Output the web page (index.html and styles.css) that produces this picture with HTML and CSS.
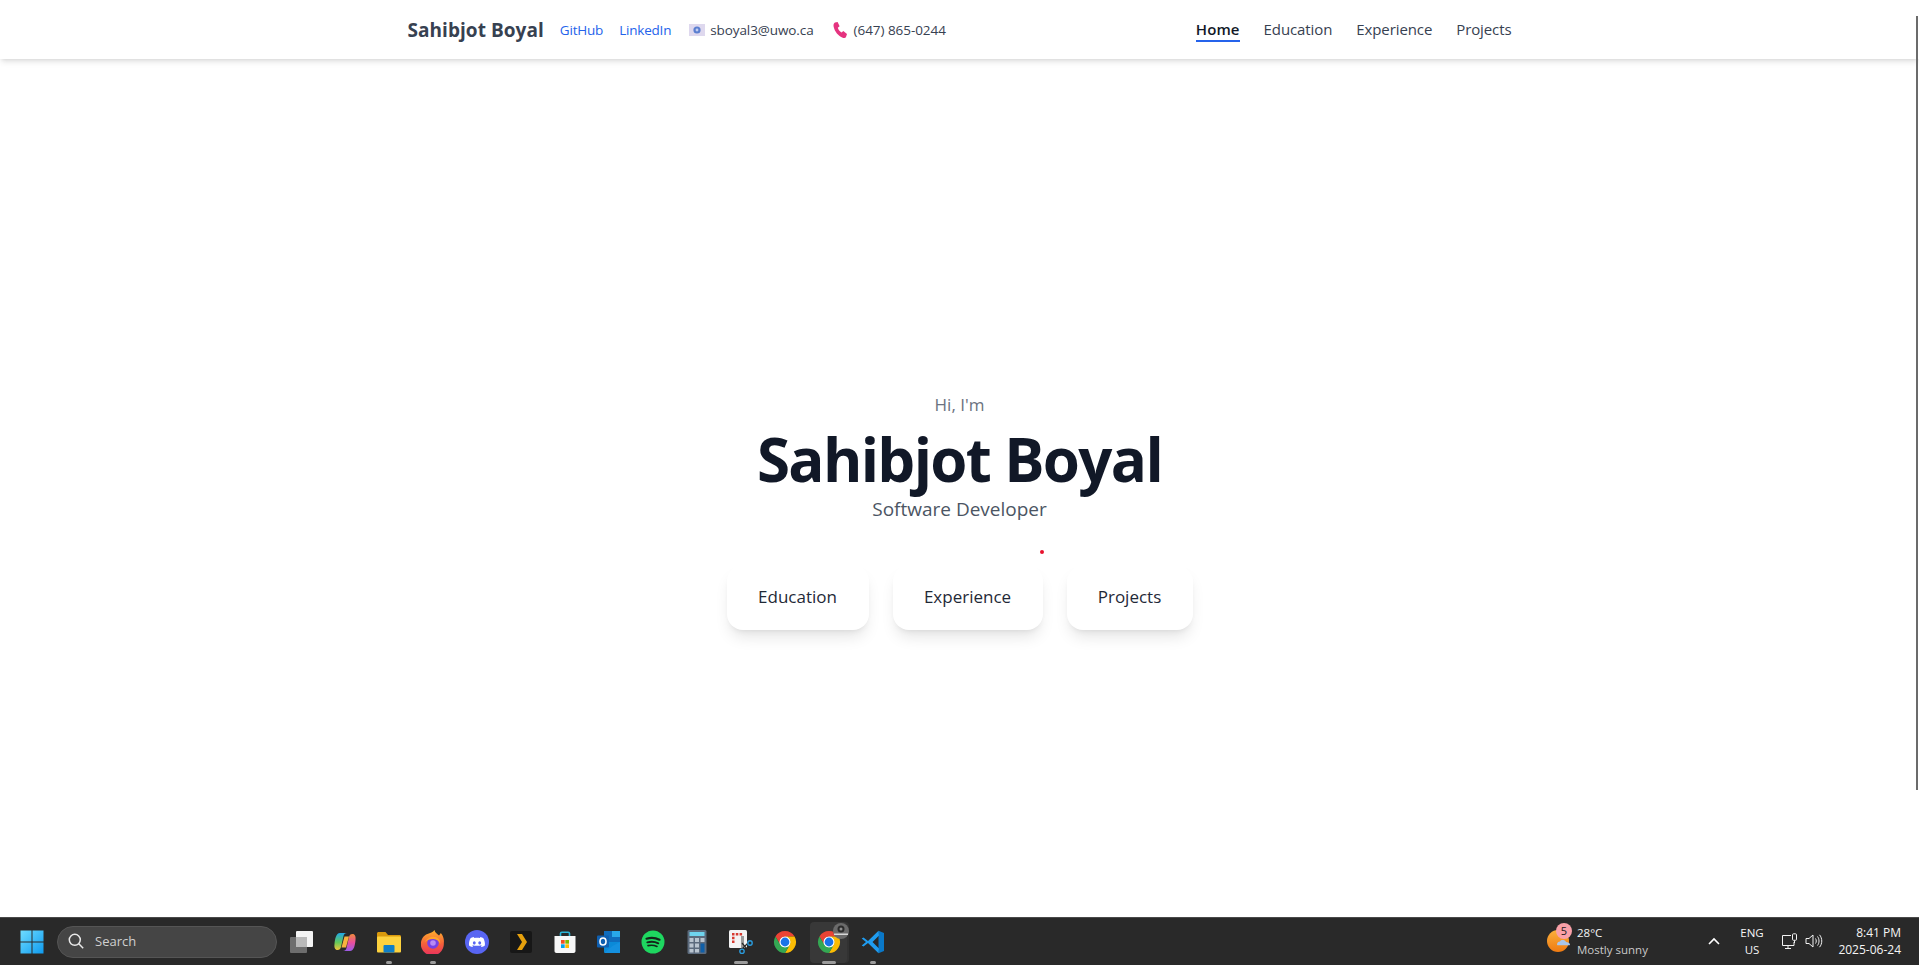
FILE: index.html
```html
<!DOCTYPE html>
<html lang="en">
<head>
    <meta charset="UTF-8">
    <meta name="viewport" content="width=device-width, initial-scale=1.0">
    <title>Sahibjot Boyal</title>
    <link rel="stylesheet" href="styles.css">
</head>
<body>
    <svg class="defs" width="0" height="0">
        <symbol id="chrome" viewBox="0 0 24 24">
            <circle cx="12" cy="12" r="6" fill="#fff"/>
            <path fill="#ea4335" d="M12 1A11 11 0 0 1 21.53 6.5H12A5.5 5.5 0 0 0 7.24 14.75L2.47 6.5A11 11 0 0 1 12 1Z"/>
            <path fill="#fbbc04" d="M21.53 6.5A11 11 0 0 1 12 23L16.76 14.75A5.5 5.5 0 0 0 12 6.5Z"/>
            <path fill="#34a853" d="M12 23A11 11 0 0 1 2.47 6.5L7.24 14.75A5.5 5.5 0 0 0 16.76 14.75Z"/>
            <circle cx="12" cy="12" r="4.4" fill="#1a73e8"/>
        </symbol>
    </svg>

    <div class="page">
        <header class="navbar">
            <div class="nav-inner">
                <div class="nav-left">
                    <a class="brand" href="#">Sahibjot Boyal</a>
                    <a class="ext-link" href="#">GitHub</a>
                    <a class="ext-link" href="#">LinkedIn</a>
                    <span class="contact email">
                        <svg width="16" height="12" viewBox="0 0 16 12"><rect width="16" height="12" fill="#ded8ee"/><circle cx="8" cy="6" r="3.6" fill="#5b7fd0"/><circle cx="8" cy="6" r="1.4" fill="#c3cdf0"/></svg>
                        sboyal3@uwo.ca
                    </span>
                    <span class="contact phone">
                        <svg width="15" height="16" viewBox="0 0 15 16"><path fill="#e5337f" d="M2 .6 4.6 0l2 4.2-1.8 1.5c.6 2 1.8 3.500 3.800 4.700l1.700-1.300 3.700 3-1 2.800c-.5.900-2 1.300-3.300.8C5.500 14.200 1.500 9.500.6 4.500.3 2.800.8 1.200 2 .6Z"/></svg>
                        (647) 865-0244
                    </span>
                </div>
                <nav class="nav-right">
                    <a class="nav-link active" href="#">Home</a>
                    <a class="nav-link" href="#">Education</a>
                    <a class="nav-link" href="#">Experience</a>
                    <a class="nav-link" href="#">Projects</a>
                </nav>
            </div>
        </header>

        <main class="hero">
            <p class="hero-hi">Hi, I'm</p>
            <h1 class="hero-name">Sahibjot Boyal</h1>
            <p class="hero-role">Software Developer</p>
            <div class="hero-buttons">
                <a class="card-btn btn-edu" href="#">Education</a>
                <a class="card-btn btn-exp" href="#">Experience</a>
                <a class="card-btn btn-pro" href="#">Projects</a>
            </div>
        </main>

        <footer class="taskbar">
            <div class="task-left">
                <div class="task-btn start">
                    <svg width="24" height="24" viewBox="0 0 24 24">
                        <defs><linearGradient id="win" x1="0" y1="0" x2="1" y2="1"><stop offset="0" stop-color="#6fdcff"/><stop offset="1" stop-color="#0f9bef"/></linearGradient></defs>
                        <path fill="url(#win)" d="M.5.500h11v11H.5zM12.500.500h11v11h-11zM.5 12.500h11v11H.5zM12.500 12.500h11v11h-11z"/>
                    </svg>
                </div>
                <div class="search">
                    <svg width="16" height="16" viewBox="0 0 16 16" fill="none" stroke="#e8e8e8" stroke-width="1.500"><circle cx="6.800" cy="6.800" r="5.500"/><path d="m10.800 10.800 4.400 4.400"/></svg>
                    <span>Search</span>
                </div>
                <div class="task-btn">
                    <svg width="24" height="24" viewBox="0 0 24 24"><rect x="7" y="1" width="17" height="16" rx="1" fill="#f4f4f4"/><rect x="1" y="7" width="17" height="16" rx="1" fill="#6d6d6d"/><rect x="7" y="7" width="11" height="10" fill="#b9b9b9"/></svg>
                </div>
                <div class="task-btn">
                    <svg width="24" height="24" viewBox="0 0 24 24">
                        <defs>
                            <linearGradient id="copa" x1="0" y1="0" x2="0" y2="1"><stop offset="0" stop-color="#1fa8e8"/><stop offset=".55" stop-color="#63c85a"/><stop offset="1" stop-color="#f2c53a"/></linearGradient>
                            <linearGradient id="copb" x1="0" y1="0" x2="0" y2="1"><stop offset="0" stop-color="#f08a3c"/><stop offset=".5" stop-color="#ea4f9c"/><stop offset="1" stop-color="#9a5be8"/></linearGradient>
                        </defs>
                        <path fill="url(#copb)" d="M17 21h-7c2 0 3-1 3.500-3L16 7c.5-2 1.500-3 3.500-3 2.500 0 3.500 2.500 3 6-.5 5-1.500 11-5.500 11Z"/>
                        <path fill="url(#copa)" d="M7 3h7c-2 0-3 1-3.500 3L8 17c-.5 2-1.500 3-3.500 3C2 20 1 17.500 1.500 14 2 9 3 3 7 3Z"/>
                        <path fill="#f7b23e" d="M11.500 6.500H16L13 17.500H8.500Z"/>
                    </svg>
                </div>
                <div class="task-btn running">
                    <svg width="24" height="24" viewBox="0 0 24 24"><path fill="#d99a0d" d="M0 3.500C0 2.700.7 2 1.500 2h7l2.500 3h11.500c.8 0 1.500.7 1.500 1.500V9H0Z"/><rect y="6.500" width="24" height="16" rx="1" fill="#fdd23e"/><rect x="6.500" y="15" width="11" height="7.500" rx="1" fill="#0f7fc8"/></svg>
                </div>
                <div class="task-btn running">
                    <svg width="24" height="24" viewBox="0 0 24 24">
                        <defs><linearGradient id="fox" x1="0" y1="0" x2="0" y2="1"><stop offset="0" stop-color="#ffb32c"/><stop offset=".55" stop-color="#f5603a"/><stop offset="1" stop-color="#e8305f"/></linearGradient></defs>
                        <path fill="url(#fox)" d="M13.500 0c.3 2.500 2.500 3.500 4.500 5.500.8-.8 1.300-1.500 1.800-2.500 2.500 2.800 3.500 6.500 3 10A11.500 11.500 0 1 1 1.500 8c1.500-2.200 3-3.300 5-4 2.500-1 5.500-1.500 7-4Z"/>
                        <circle cx="12" cy="13" r="5.800" fill="#7542e5"/>
                        <circle cx="12" cy="13" r="2.800" fill="#b78bf5"/>
                        <path fill="#ffa52c" d="M4 12c2-4.500 8-6.500 12-4.500 2.500 1.300 3.500 4 3.200 6.500-1-2.800-3.500-4.800-6.700-5-3.500-.2-6.300 1-8.500 3Z"/>
                    </svg>
                </div>
                <div class="task-btn">
                    <svg width="24" height="24" viewBox="0 0 24 24"><circle cx="12" cy="12" r="12" fill="#5865f2"/><path fill="#fff" d="M8.500 7c-1 .2-2 .5-2.800 1C4.200 10.300 3.800 13 4 15.500c1 .8 2.200 1.300 3.400 1.600l.8-1.300-1.300-.6.300-.3c2.800 1.200 6.600 1.200 9.500 0l.3.300-1.300.6.800 1.300c1.200-.3 2.400-.8 3.400-1.600.3-3-.5-5.500-1.700-7.500-.8-.5-1.800-.8-2.800-1l-.5 1c-1.800-.3-3.600-.3-5.400 0ZM9.300 11.300c.8 0 1.400.8 1.400 1.600s-.6 1.600-1.400 1.600-1.400-.8-1.400-1.600.6-1.600 1.400-1.600Zm5.400 0c.8 0 1.400.8 1.400 1.600s-.6 1.600-1.400 1.600-1.400-.8-1.400-1.600.6-1.600 1.400-1.600Z"/></svg>
                </div>
                <div class="task-btn">
                    <svg width="24" height="24" viewBox="0 0 24 24"><rect x="1" y="1" width="22" height="22" rx="2" fill="#171717"/><path fill="#e5a00d" d="M8 4h5l5 8-5 8H8l5-8Z"/></svg>
                </div>
                <div class="task-btn">
                    <svg width="24" height="24" viewBox="0 0 24 24"><path fill="none" stroke="#2bb5d8" stroke-width="1.600" d="M7.500 7V3.500c0-.8.5-1.300 1.300-1.300h6.400c.8 0 1.300.5 1.300 1.300V7"/><path fill="#f7f7f7" d="M1.500 6h21v15c0 1.200-.8 2-2 2h-17c-1.200 0-2-.8-2-2Z"/><path fill="#f25022" d="M8 10h3.700v3.700H8z"/><path fill="#7fba00" d="M12.300 10H16v3.700h-3.700z"/><path fill="#00a4ef" d="M8 14.300h3.700V18H8z"/><path fill="#ffb900" d="M12.300 14.300H16V18h-3.700z"/></svg>
                </div>
                <div class="task-btn">
                    <svg width="24" height="24" viewBox="0 0 24 24"><rect x="7" y="1" width="16" height="12" fill="#0f6cbd"/><rect x="15" y="1" width="8" height="6" fill="#28a8ea"/><path fill="#0a8ad8" d="M7 12h16v11H8.500C7.700 23 7 22.300 7 21.500Z"/><path fill="#1490df" d="m7 23 8.500-7L23 12v11Z"/><rect y="5.500" width="12" height="12" rx="1" fill="#0f5fb0"/><ellipse cx="6" cy="11.500" rx="3" ry="3.500" fill="none" stroke="#fff" stroke-width="1.600"/></svg>
                </div>
                <div class="task-btn">
                    <svg width="24" height="24" viewBox="0 0 24 24"><circle cx="12" cy="12" r="11.500" fill="#1ed760"/><path fill="none" stroke="#14241a" stroke-width="2.200" stroke-linecap="round" d="M5.500 8.700c4.500-1.300 9-1 13 1"/><path fill="none" stroke="#14241a" stroke-width="1.900" stroke-linecap="round" d="M6.300 12.300c3.800-1 7.700-.7 11 1"/><path fill="none" stroke="#14241a" stroke-width="1.600" stroke-linecap="round" d="M7 15.600c3-.7 6.200-.5 9 .9"/></svg>
                </div>
                <div class="task-btn">
                    <svg width="24" height="24" viewBox="0 0 24 24"><rect x="2.500" width="19" height="24" rx="1.500" fill="#5c6b7d"/><rect x="4.500" y="2" width="15" height="4" fill="#6fd4ee"/><path fill="#b9c4cf" d="M4.500 8h4v4h-4zM10 8h4v4h-4zM15.500 8h4v4h-4zM4.500 13.500h4v4h-4zM10 13.500h4v4h-4zM4.500 19h4v3.500h-4zM10 19h4v3.500h-4z"/><rect x="15.500" y="13.500" width="4" height="9" fill="#0f5fa8"/></svg>
                </div>
                <div class="task-btn running wide">
                    <svg width="24" height="24" viewBox="0 0 24 24"><rect width="18" height="18" rx="1.500" fill="#f3f3f3"/><path fill="#d73a30" d="M3 3h2.500v2.500H3zM6.800 3h2.500v2.500H6.800zM10.600 3h2.500v2.500h-2.500zM3 6.800h2.500v2.500H3zM3 10.600h2.500v2.500H3z"/><path fill="#9a9a9a" d="M12 6h3v12h-3z"/><path stroke="#2b2b2b" stroke-width="1.200" d="m13 13 5 6M19 13l-6 6"/><circle cx="21" cy="13" r="2.200" fill="none" stroke="#2a9bdc" stroke-width="1.400"/><circle cx="13" cy="21.300" r="2.200" fill="none" stroke="#2a9bdc" stroke-width="1.400"/></svg>
                </div>
                <div class="task-btn">
                    <svg width="24" height="24"><use href="#chrome"/></svg>
                </div>
                <div class="task-btn running wide active-app">
                    <svg width="24" height="24"><use href="#chrome"/></svg>
                    <span class="avatar">
                        <svg width="18" height="16" viewBox="0 0 18 16"><circle cx="9" cy="8" r="8" fill="#6b6b6b"/><circle cx="9" cy="6" r="3.500" fill="#2c2c2c"/><circle cx="9" cy="6" r="1.500" fill="#8f8f8f"/><path fill="#d8d8d8" d="M2 10.500h14V12H2z"/></svg>
                    </span>
                </div>
                <div class="task-btn running">
                    <svg width="24" height="24" viewBox="0 0 24 24"><path fill="#0a78c8" d="M17.500.700 23 3v18l-5.500 2.300Z"/><path fill="#1f9cf0" d="M17.500.700 7 11 2.500 7.500.7 8.500 5 12 .7 15.500l1.800 1L7 13l10.500 10.300L18 18.500 11.500 12 18 5.500Z"/></svg>
                </div>
            </div>

            <div class="task-right">
                <div class="weather">
                    <span class="weather-icon">
                        <svg width="24" height="24" viewBox="0 0 24 24">
                            <defs><linearGradient id="sun" x1="0" y1="0" x2="0" y2="1"><stop offset="0" stop-color="#fbb03b"/><stop offset="1" stop-color="#ee7a12"/></linearGradient></defs>
                            <circle cx="11" cy="12" r="11" fill="url(#sun)"/>
                            <path fill="#a9c6ea" d="M10 15.500c0-1.800 1.500-3 3-3 .8-2 5-2 6 .5 1.800 0 4 1 4 2.500 0 .5-.2.700-.5.700H10.500c-.3 0-.5-.3-.5-.7Z"/>
                        </svg>
                        <span class="badge">5</span>
                    </span>
                    <div class="weather-text">
                        <span>28°C</span>
                        <span class="muted">Mostly sunny</span>
                    </div>
                </div>
                <svg class="chevron" width="12" height="8" viewBox="0 0 12 8" fill="none" stroke="#fff" stroke-width="1.600"><path d="m1 7 5-5 5 5"/></svg>
                <div class="lang"><span>ENG</span><span>US</span></div>
                <div class="tray">
                    <svg width="17" height="17" viewBox="0 0 17 17" fill="none" stroke="#f2f2f2" stroke-width="1"><path d="M10 2.500H1.500v10H13V9"/><path d="M4 15.500h6M7 12.500v3"/><rect x="11.500" y=".8" width="4" height="6.500" rx="1"/><path d="M13.500 7.500V10"/></svg>
                    <svg width="18" height="16" viewBox="0 0 18 16" fill="none" stroke="#f2f2f2" stroke-width="1"><path d="M1 5.500h3L8 2v12l-4-3.500H1Z"/><path d="M10.500 5.500c1 1.500 1 3.500 0 5M12.500 3.500c2 2.500 2 6.500 0 9M14.500 1.800c3 3.500 3 9 0 12.400"/></svg>
                </div>
                <div class="clock"><span>8:41 PM</span><span>2025-06-24</span></div>
            </div>
        </footer>

        <span class="cursor-dot"></span>
        <span class="scroll-line"></span>
    </div>
</body>
</html>
```

FILE: styles.css
```css
* {
    box-sizing: border-box;
}

body {
    margin: 0;
    font-family: "Open Sans", "Noto Sans", sans-serif;
    background-color: #fff;
    color: #1f2937;
}

a {
    text-decoration: none;
    color: inherit;
}

.defs {
    position: absolute;
}

.page {
    position: relative;
    height: 965px;
    overflow: hidden;
    display: flex;
    flex-direction: column;
}

/* top nav */
.navbar {
    height: 59px;
    flex: none;
    background: #fff;
    box-shadow: 0 4px 6px -1px rgba(0, 0, 0, 0.1), 0 2px 4px -2px rgba(0, 0, 0, 0.1);
}

.nav-inner {
    width: 1152px;
    margin: 0 auto;
    padding: 0 24px;
    height: 100%;
    display: flex;
    align-items: center;
    justify-content: space-between;
}

.nav-left {
    display: flex;
    align-items: center;
}

.brand {
    font-size: 19px;
    font-weight: 700;
    color: #374151;
    letter-spacing: 0.05px;
    margin-right: 16px;
}

.ext-link {
    font-size: 13.5px;
    color: #2563eb;
    letter-spacing: -0.2px;
    margin-right: 16px;
}

.contact {
    display: flex;
    align-items: center;
    font-size: 13.5px;
    color: #374151;
}

.contact.email {
    gap: 5px;
    letter-spacing: -0.1px;
    margin-left: 2px;
    margin-right: 19px;
}

.contact.phone {
    gap: 6px;
    letter-spacing: -0.05px;
}

.nav-right {
    display: flex;
    gap: 24px;
    margin-top: 2px;
}

.nav-link {
    font-size: 15px;
    letter-spacing: -0.1px;
    color: #374151;
    padding-bottom: 1px;
    border-bottom: 2px solid transparent;
}

.nav-link.active {
    font-weight: 600;
    letter-spacing: 0.1px;
    color: #111827;
    border-bottom-color: #2563eb;
}

/* hero */
.hero {
    flex: 1;
    display: flex;
    flex-direction: column;
    align-items: center;
    justify-content: center;
    padding-top: 47px;
}

.hero-hi {
    margin: 0;
    font-size: 17px;
    color: #6b7280;
}

.hero-name {
    margin: 6px 0 0;
    font-size: 60px;
    line-height: 74px;
    font-weight: 700;
    letter-spacing: -1.65px;
    color: #111827;
}

.hero-role {
    margin: 0;
    font-size: 19px;
    color: #4b5563;
}

.hero-buttons {
    display: flex;
    gap: 24px;
    margin-top: 43px;
}

.card-btn {
    height: 65px;
    padding-bottom: 2px;
    display: flex;
    align-items: center;
    justify-content: center;
    background: #fff;
    border-radius: 16px;
    font-size: 17px;
    color: #1f2937;
    box-shadow: 0 10px 15px -3px rgba(0, 0, 0, 0.1), 0 4px 6px -4px rgba(0, 0, 0, 0.1);
}

.btn-edu {
    width: 142px;
}

.btn-exp {
    width: 150px;
}

.btn-pro {
    width: 126px;
}

.cursor-dot {
    position: absolute;
    left: 1040px;
    top: 550px;
    width: 4px;
    height: 4px;
    border-radius: 50%;
    background: #e8112d;
}

.scroll-line {
    position: absolute;
    left: 1916px;
    top: 16px;
    width: 2px;
    height: 774px;
    background: #6b6b6b;
}

/* windows taskbar */
.taskbar {
    height: 48px;
    flex: none;
    display: flex;
    align-items: center;
    justify-content: space-between;
    background: #292929;
    border-top: 1px solid #4a4a4a;
    color: #f5f5f5;
}

.task-left {
    display: flex;
    align-items: center;
    padding-left: 10px;
}

.task-btn {
    position: relative;
    width: 44px;
    height: 46px;
    flex: none;
    display: flex;
    align-items: center;
    justify-content: center;
}

.task-btn svg {
    position: relative;
}

.task-btn.start {
    margin-right: 3px;
}

.task-btn.running::after {
    content: "";
    position: absolute;
    left: 19px;
    bottom: 1px;
    width: 6px;
    height: 3px;
    border-radius: 2px;
    background: #9b9b9b;
}

.task-btn.wide::after {
    left: 15px;
    width: 14px;
}

.active-app::before {
    content: "";
    position: absolute;
    left: 3px;
    right: 4px;
    top: 3px;
    bottom: 2px;
    background: #383838;
    border-radius: 4px;
    box-shadow: 2px 0 0 #323232;
}

.avatar {
    position: absolute;
    top: 4px;
    right: 1px;
    line-height: 0;
}

.search {
    width: 220px;
    height: 32px;
    flex: none;
    margin-right: 2px;
    display: flex;
    align-items: center;
    gap: 11px;
    padding-left: 10px;
    padding-bottom: 1px;
    background: #454545;
    border: 1px solid #555;
    border-radius: 16px;
    font-size: 13px;
    color: #cfcfcf;
}

.task-right {
    display: flex;
    align-items: center;
    font-size: 11.5px;
    padding-right: 18px;
    padding-bottom: 1px;
}

.weather {
    display: flex;
    align-items: center;
    gap: 6px;
    width: 161px;
}

.weather-icon {
    position: relative;
    width: 24px;
    height: 24px;
    line-height: 0;
}

.badge {
    position: absolute;
    top: -6px;
    left: 9px;
    width: 16px;
    height: 16px;
    border-radius: 50%;
    background: #f9a0a8;
    color: #1b1b1b;
    font-size: 11px;
    line-height: 16px;
    text-align: center;
}

.weather-text,
.lang,
.clock {
    display: flex;
    flex-direction: column;
    line-height: 17px;
}

.muted {
    color: #c9c9c9;
}

.chevron {
    margin-right: 17px;
}

.lang {
    align-items: center;
    width: 30px;
    margin-right: 14px;
}

.tray {
    display: flex;
    align-items: center;
    gap: 7px;
    margin-right: 12px;
}

.clock {
    align-items: flex-end;
    width: 66px;
    font-size: 12px;
}
```
